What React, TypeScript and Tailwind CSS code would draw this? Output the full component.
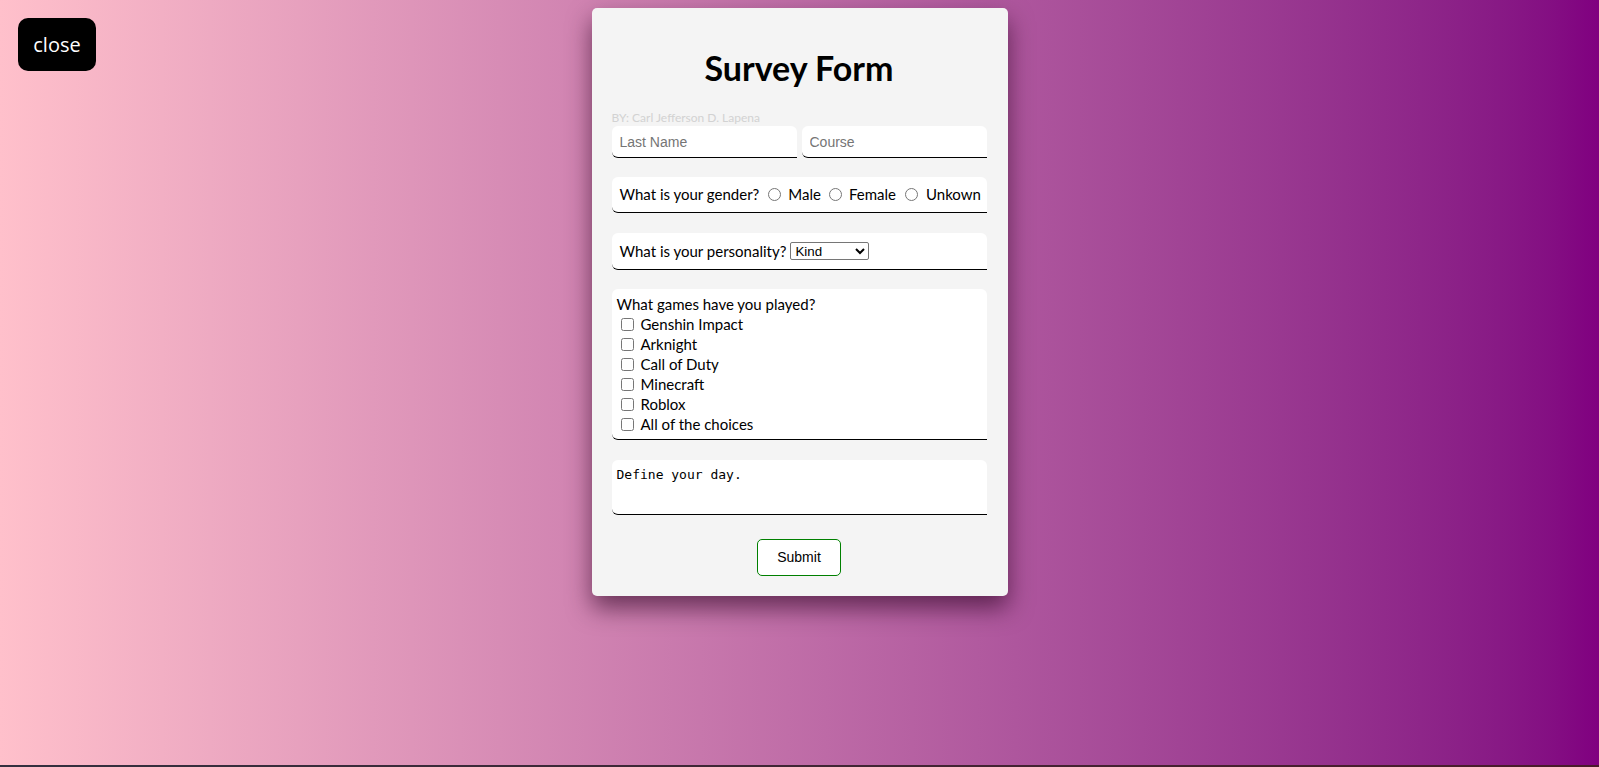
import React from 'react';

const games = ['Genshin Impact', 'Arknight', 'Call of Duty', 'Minecraft', 'Roblox', 'All of the choices'];

const box = 'bg-white rounded-t-[6px] rounded-bl-[6px] border-b-[1.5px] border-black';

const App: React.FC = () => {
  return (
    <div className="font-['Lato',sans-serif] text-black">
      <div className="relative h-[765px] bg-linear-to-r from-[#ffc0cb] to-[#800080]">
        {/* floating close button */}
        <button className="absolute left-[18px] top-[18px] w-[78px] h-[53px] rounded-[10px] bg-black text-white text-[20px] font-['Open_Sans',sans-serif]">
          close
        </button>

        <div className="flex justify-center pt-[8px]">
          <form className="w-[416px] bg-[#f4f4f4] rounded-[5px] pl-[20px] pr-[21px] pt-[41px] pb-[20px] shadow-[0_12px_24px_rgba(40,0,30,0.6)]">
            <h1 className="text-center text-[34px] font-bold leading-[38px]">Survey Form</h1>

            <p className="mt-[23px] text-[12px] leading-[15px] text-[#d2d2d2]">BY: Carl Jefferson D. Lapena</p>

            <div className="flex gap-[5px] mt-[1px]">
              <input
                className={`${box} w-[185px] h-[32px] pl-[8px] text-[14px] font-['Liberation_Sans',sans-serif] placeholder:text-[#757575] outline-none`}
                placeholder="Last Name"
              />
              <input
                className={`${box} w-[185px] h-[32px] pl-[8px] text-[14px] font-['Liberation_Sans',sans-serif] placeholder:text-[#757575] outline-none`}
                placeholder="Course"
              />
            </div>

            <div className={`${box} mt-[19px] h-[36px] px-[8px] flex items-center text-[15px] whitespace-nowrap`}>
              <span>What is your gender?</span>
              <input type="radio" name="gender" className="ml-[9px] mr-[3px]" />
              <span className="ml-[4px]">Male</span>
              <input type="radio" name="gender" className="ml-[8px] mr-[3px]" />
              <span className="ml-[4px]">Female</span>
              <input type="radio" name="gender" className="ml-[9px] mr-[3px]" />
              <span className="ml-[5px]">Unkown</span>
            </div>

            <div className={`${box} mt-[20px] h-[37px] px-[8px] flex items-center text-[15px] whitespace-nowrap`}>
              <span>What is your personality?</span>
              <select className="ml-[4px] w-[79px] h-[18px] border border-[#767676] rounded-[2px] bg-white text-[13.33px] font-['Liberation_Sans',sans-serif] leading-none">
                <option>Kind</option>
                <option>Cheerful</option>
                <option>Serious</option>
              </select>
            </div>

            <div className={`${box} mt-[19px] p-[5px] text-[15px] leading-[20px]`}>
              <p>What games have you played?</p>
              {games.map((g) => (
                <label key={g} className="flex items-center h-[20px]">
                  <input type="checkbox" className="ml-[4px] mr-[3px]" />
                  <span className="ml-[4px]">{g}</span>
                </label>
              ))}
            </div>

            <textarea
              className={`${box} block mt-[20px] w-full h-[55px] px-[5px] py-[5px] text-[13px] font-['DejaVu_Sans_Mono',monospace] resize-none outline-none`}
              defaultValue="Define your day."
            />

            <div className="flex justify-center mt-[24px]">
              <button
                type="button"
                className="w-[84px] h-[37px] bg-white border border-[#008000] rounded-[5px] text-[14px] font-['Liberation_Sans',sans-serif]"
              >
                Submit
              </button>
            </div>
          </form>
        </div>
      </div>
      <div className="h-[2px] bg-linear-to-r from-[#33303f] to-[#4a1a2a]" />
    </div>
  );
};

export default App;
